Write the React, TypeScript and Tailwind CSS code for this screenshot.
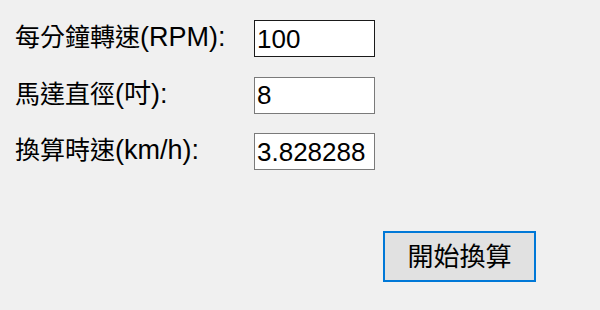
const font = { fontFamily: '"Liberation Sans", "Noto Sans CJK TC", sans-serif' }

interface FieldRowProps {
    label: string
    unit: string
    value: string
    focused?: boolean
}

function FieldRow({ label, unit, value, focused }: FieldRowProps) {
    return (
        <div className="flex h-[37px] items-center">
            <div className="w-[239px] text-[25px] leading-none text-black -mt-[2px]">
                {label}
                <span className="text-[27px]">{unit}</span>
            </div>
            <input
                readOnly
                value={value}
                className={`h-[37px] w-[121px] border bg-white pl-[2px] pt-[1px] text-[26px] leading-none text-black outline-none ${
                    focused ? 'border-[#1a1a1a]' : 'border-[#7a7a7a]'
                }`}
                style={font}
            />
        </div>
    )
}

export default function App() {
    return (
        <div className="h-[310px] w-[600px] bg-[#f0f0f0] pl-[15px] pt-[20px]" style={font}>
            <div className="flex flex-col gap-[19.5px]">
                <FieldRow label="每分鐘轉速" unit="(RPM):" value="100" focused />
                <FieldRow label="馬達直徑" unit="(吋):" value="8" />
                <FieldRow label="換算時速" unit="(km/h):" value="3.828288" />
            </div>

            <div className="mt-[61px] flex pl-[368px]">
                <button className="flex h-[51px] w-[153px] items-center justify-center border-2 border-[#0078d7] bg-[#e1e1e1] text-[26px] leading-none text-black">
                    開始換算
                </button>
            </div>
        </div>
    )
}
